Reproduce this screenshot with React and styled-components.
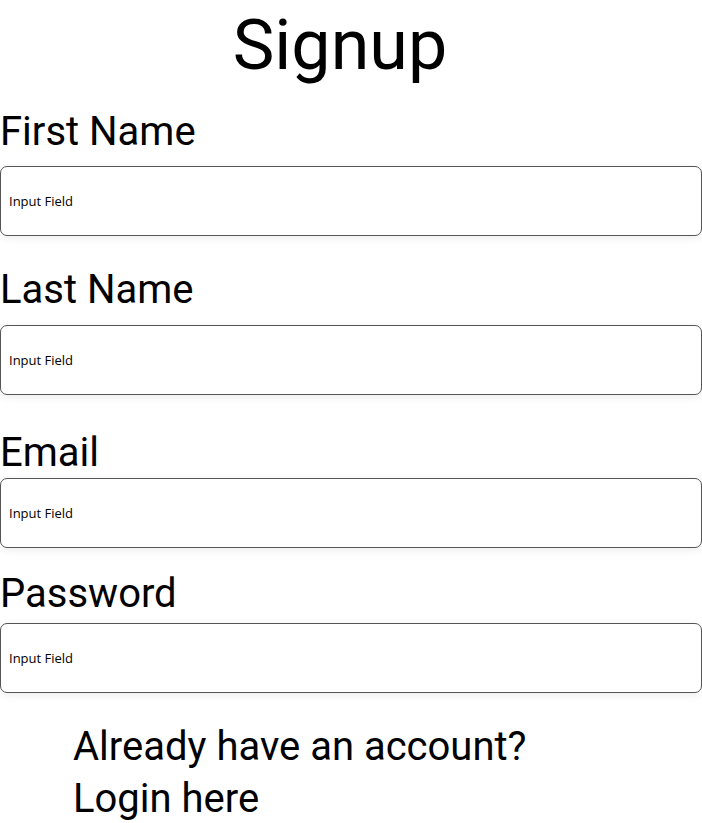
import styled, { createGlobalStyle } from 'styled-components';

const GlobalStyle = createGlobalStyle`
  body {
    margin: 0;
    background: #fff;
    font-family: Roboto, "Liberation Sans", sans-serif;
    color: #000;
  }
`;

const Page = styled.div`
  display: flex;
  flex-direction: column;
  width: 702px;
`;

const Title = styled.h1`
  margin: 3px 0 0;
  padding-right: 22px;
  font-size: 70px;
  font-weight: 400;
  line-height: 84px;
  text-align: center;
`;

// 라벨 + 입력칸 묶음 (위 여백만 다름)
const Field = styled.div`
  display: flex;
  flex-direction: column;
  margin-top: ${(props) => props.top}px;
`;

const Label = styled.label`
  font-size: 40px;
  line-height: normal;
  margin-bottom: ${(props) => props.gap}px;
`;

const Input = styled.input`
  box-sizing: border-box;
  width: 100%;
  height: 70px;
  padding: 0 8px;
  border: 1px solid #555;
  border-radius: 7px;
  box-shadow: 0 2px 8px rgba(0, 0, 0, 0.08);
  font-family: "Open Sans", sans-serif;
  font-size: 13px;
  outline: none;

  &::placeholder {
    color: #000;
  }
`;

const Footer = styled.p`
  margin: 28px 0 0 73px;
  font-size: 40px;
  line-height: 52px;
`;

const fields = [
  { id: 'first', label: 'First Name', top: 21, gap: 11 },
  { id: 'last', label: 'Last Name', top: 30, gap: 12 },
  { id: 'email', label: 'Email', top: 34, gap: 2 },
  { id: 'password', label: 'Password', top: 22, gap: 6 },
];

const App = () => (
  <>
    <GlobalStyle />
    <Page>
      <Title>Signup</Title>
      {fields.map((f) => (
        <Field key={f.id} top={f.top}>
          <Label htmlFor={f.id} gap={f.gap}>
            {f.label}
          </Label>
          <Input id={f.id} placeholder="Input Field" />
        </Field>
      ))}
      <Footer>
        Already have an account?
        <br />
        Login here
      </Footer>
    </Page>
  </>
);

export default App;
